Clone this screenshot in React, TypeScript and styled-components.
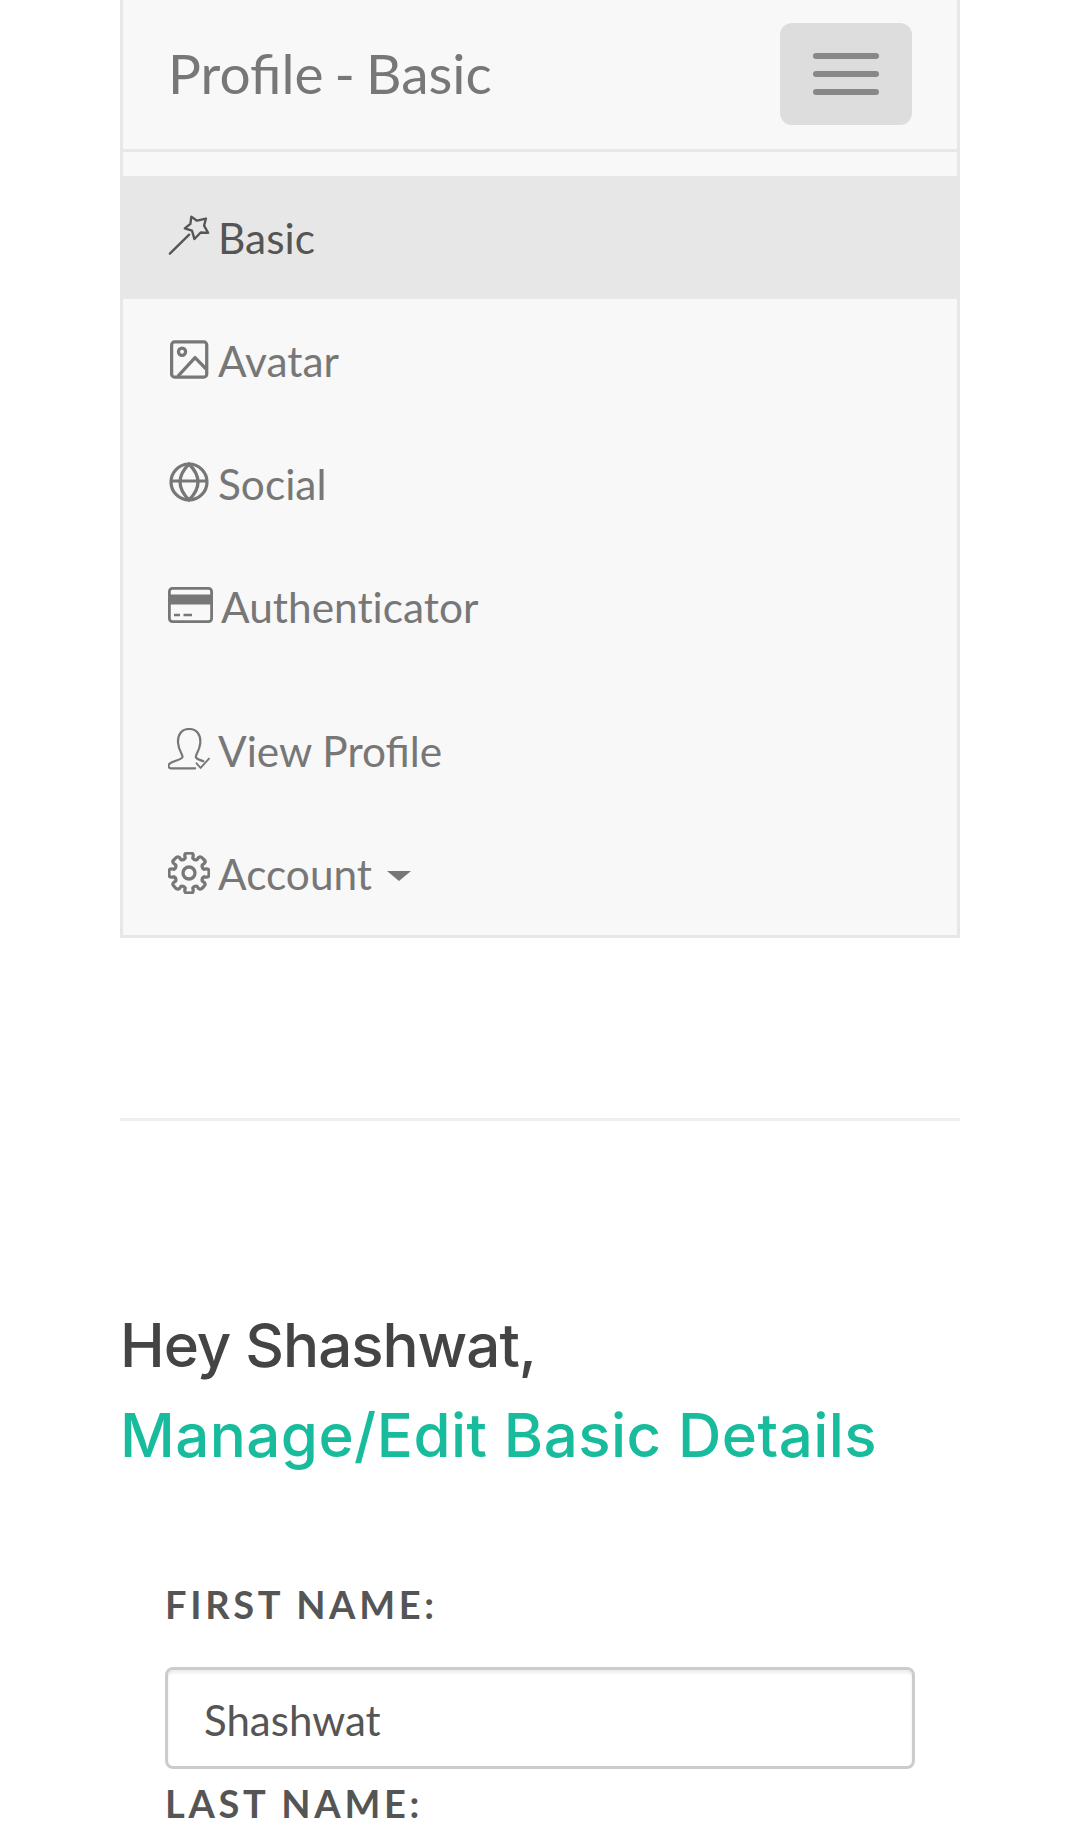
import React from 'react';
import styled, { createGlobalStyle } from 'styled-components';

const Global = createGlobalStyle`
  html, body {
    margin: 0;
    padding: 0;
    background: #fff;
    font-family: Lato, "Liberation Sans", sans-serif;
  }
  * { box-sizing: border-box; }
`;

const Page = styled.div`
  width: 1080px;
  height: 1839px;
  overflow: hidden;
  padding: 0 120px;
`;

const Navbar = styled.nav`
  width: 840px;
  height: 938px;
  background: #f8f8f8;
  border: 3px solid #e7e7e7;
  border-top: 0;
`;

const Header = styled.div`
  height: 152px;
  padding: 0 45px 2px 45px;
  display: flex;
  align-items: center;
  justify-content: space-between;
  border-bottom: 3px solid #e7e7e7;
`;

const Brand = styled.div`
  font-size: 55px;
  word-spacing: -3px;
  color: #777;
  line-height: 1;
`;

const Toggle = styled.div`
  width: 132px;
  height: 102px;
  border-radius: 12px;
  background: #ddd;
  display: flex;
  flex-direction: column;
  align-items: center;
  justify-content: center;
  gap: 12px;
`;

const Bar = styled.span`
  display: block;
  width: 66px;
  height: 6px;
  border-radius: 3px;
  background: #888;
`;

const Menu = styled.ul`
  list-style: none;
  margin: 0;
  padding: 24px 0 0;
`;

const Item = styled.li<{ $active?: boolean; $gapAfter?: boolean; $noLigatures?: boolean }>`
  height: 123px;
  margin-bottom: ${(p) => (p.$gapAfter ? '21px' : '0')};
  padding-left: 45px;
  display: flex;
  align-items: center;
  font-size: 42.4px;
  font-variant-ligatures: ${(p) => (p.$noLigatures ? 'none' : 'normal')};
  color: ${(p) => (p.$active ? '#555' : '#777')};
  background: ${(p) => (p.$active ? '#e7e7e7' : 'transparent')};
`;

const IconBox = styled.span<{ $width: number; $lift?: number; $indent?: number }>`
  width: ${(p) => p.$width}px;
  flex: none;
  display: flex;
  align-items: center;
  padding-left: ${(p) => p.$indent ?? 0}px;
  margin-right: 8px;
  margin-bottom: ${(p) => p.$lift ?? 0}px;
  svg { display: block; }
`;

const Caret = styled.span`
  width: 0;
  height: 0;
  margin-left: 15px;
  margin-top: 5px;
  border-top: 10px solid #777;
  border-left: 12px solid transparent;
  border-right: 12px solid transparent;
`;

const Rule = styled.hr`
  margin: 180px 0 0;
  border: 0;
  border-top: 3px solid #eee;
`;

const Heading = styled.h2`
  margin: 179px 0 0;
  font-family: Inter, Lato, sans-serif;
  font-size: 60px;
  font-weight: 500;
  letter-spacing: -1px;
  line-height: 90px;
  color: #444;
  span {
    display: block;
    color: #18bc9c;
    letter-spacing: 0.45px;
  }
`;

const Form = styled.form`
  margin-top: 101px;
  padding: 0 45px;
`;

const Label = styled.label`
  display: block;
  font-family: Lato, sans-serif;
  font-weight: 700;
  font-size: 38px;
  line-height: 46px;
  letter-spacing: 3.7px;
  text-transform: uppercase;
  color: #555;
`;

const Input = styled.input`
  display: block;
  width: 100%;
  height: 102px;
  margin: 40px 0 11px;
  padding: 3px 36px 0;
  border: 3px solid #ccc;
  border-radius: 8px;
  background: #fff;
  box-shadow: inset 0 3px 3px rgba(0, 0, 0, 0.075);
  font-family: Lato, sans-serif;
  font-size: 42px;
  color: #555;
  outline: none;
`;

const Wand = () => (
  <svg width="45" height="44" viewBox="50 40 135 132" fill="none" stroke="#555" strokeWidth="7.5" strokeLinejoin="round" strokeLinecap="round">
    <path d="M56 166 L118 105" />
    <path d="M125 47 L143 60 L172 53 L166 76 L179 99 L155 98 L135 119 L127 92 L104 85 L122 70 Z" />
  </svg>
);

const Picture = () => (
  <svg width="39" height="39" viewBox="58 60 120 120" fill="none" stroke="#777" strokeWidth="10" strokeLinejoin="round">
    <rect x="63" y="66" width="108" height="108" rx="9" />
    <circle cx="95" cy="96" r="11" />
    <path d="M82 172 L135 114 L170 150" />
  </svg>
);

const Earth = () => (
  <svg width="40" height="40" viewBox="0 0 40 40" fill="none" stroke="#777" strokeWidth="3.2">
    <circle cx="20" cy="20" r="18" />
    <path d="M20 2 C8 14 8 26 20 38 C32 26 32 14 20 2 Z" />
    <path d="M2 19 H38" />
  </svg>
);

const Card = () => (
  <svg width="45" height="36" viewBox="0 0 45 36" fill="none" stroke="#777" strokeWidth="2.8">
    <rect x="1.4" y="1.4" width="42.2" height="33.2" rx="3" />
    <path d="M2 12.5 H43" strokeWidth="10" />
    <path d="M6 28 H12 M15.5 28 H24" strokeWidth="2.6" />
  </svg>
);

const UserCheck = () => (
  <svg width="42" height="42" viewBox="55 85 125 125" fill="none" stroke="#777" strokeWidth="6.5" strokeLinejoin="round" strokeLinecap="round">
    <path d="M136 205 H64 C55 205 55 195 60 191 C70 183 92 181 98 172 C100 164 87 154 85 130 C83 104 96 88 118 88 C140 88 153 104 151 130 C149 154 136 164 138 172 C140 177 150 180 160 184" />
    <path d="M140 190 L152 204 L177 176" strokeWidth="5.5" />
  </svg>
);

// eight rounded cogs, built from the same lobe turned around the centre
const gearPath = () => {
  const cx = 21;
  const cy = 21;
  const point = (r: number, deg: number) => {
    const a = (deg * Math.PI) / 180;
    return `${(cx + r * Math.cos(a)).toFixed(2)} ${(cy + r * Math.sin(a)).toFixed(2)}`;
  };
  let d = '';
  for (let i = 0; i < 8; i++) {
    const mid = i * 45 - 90;
    d += `${i === 0 ? 'M' : 'L'}${point(15.5, mid - 14)} Q${point(21.5, mid - 15)} ${point(20, mid)} Q${point(21.5, mid + 15)} ${point(15.5, mid + 14)} Q${point(13.5, mid + 22.5)} `;
    d += `${point(15.5, mid + 31)} `;
  }
  return `${d}Z`;
};

const Gear = () => (
  <svg width="42" height="42" viewBox="0 0 42 42" fill="none" stroke="#777" strokeWidth="3.3" strokeLinejoin="round">
    <path d={gearPath()} />
    <circle cx="21" cy="21" r="6" />
  </svg>
);

const App = () => {
  return (
    <Page>
      <Global />
      <Navbar>
        <Header>
          <Brand>Profile - Basic</Brand>
          <Toggle>
            <Bar />
            <Bar />
            <Bar />
          </Toggle>
        </Header>
        <Menu>
          <Item $active>
            <IconBox $width={42} $lift={5}>
              <Wand />
            </IconBox>
            Basic
          </Item>
          <Item>
            <IconBox $width={42} $lift={2} $indent={2}>
              <Picture />
            </IconBox>
            Avatar
          </Item>
          <Item>
            <IconBox $width={42} $lift={3} $indent={1}>
              <Earth />
            </IconBox>
            Social
          </Item>
          <Item $gapAfter $noLigatures>
            <IconBox $width={45} $lift={3}>
              <Card />
            </IconBox>
            Authenticator
          </Item>
          <Item>
            <IconBox $width={42} $lift={4}>
              <UserCheck />
            </IconBox>
            View Profile
          </Item>
          <Item>
            <IconBox $width={42} $lift={2}>
              <Gear />
            </IconBox>
            Account
            <Caret />
          </Item>
        </Menu>
      </Navbar>
      <Rule />
      <Heading>
        Hey Shashwat,
        <span>Manage/Edit Basic Details</span>
      </Heading>
      <Form>
        <Label>First Name:</Label>
        <Input defaultValue="Shashwat" />
        <Label>Last Name:</Label>
      </Form>
    </Page>
  );
};

export default App;
